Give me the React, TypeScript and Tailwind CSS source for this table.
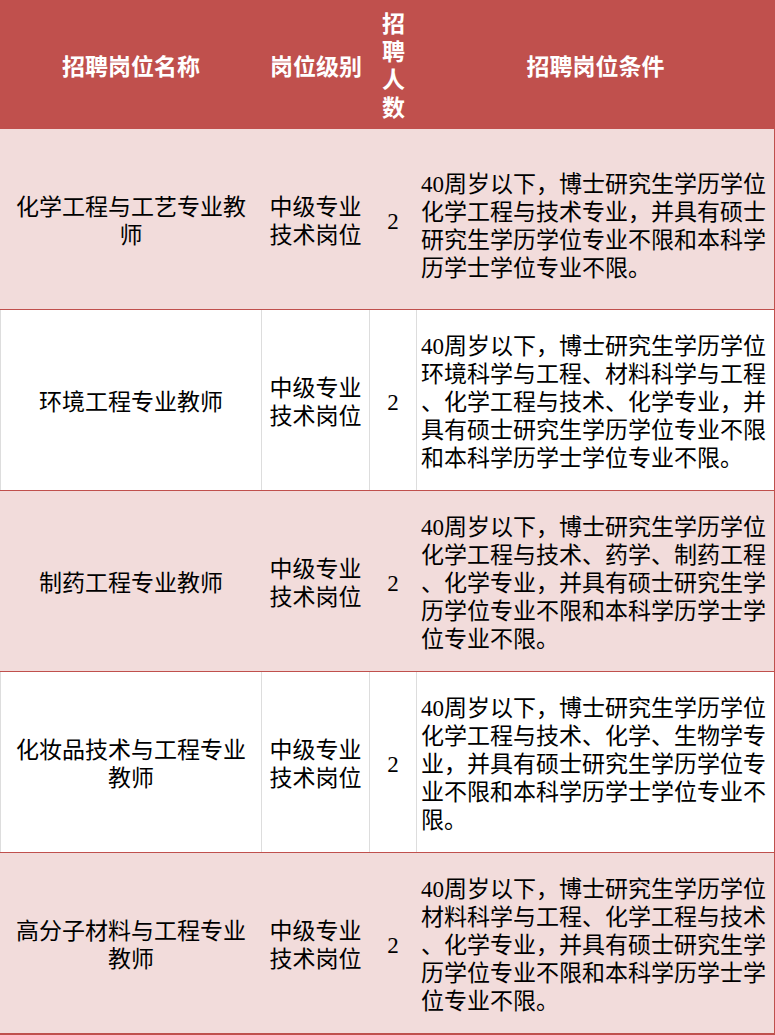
const FONT = {
  fontFamily: '"Liberation Serif", "Noto Sans CJK SC", serif',
};

interface Job {
  name: string[];
  level: string[];
  count: string;
  terms: string[];
  /** first row's terms sit a little lower than centred in the source */
  termsLow?: boolean;
}

const JOBS: Job[] = [
  {
    name: ["化学工程与工艺专业教", "师"],
    level: ["中级专业", "技术岗位"],
    count: "2",
    terms: [
      "40周岁以下，博士研究生学历学位",
      "化学工程与技术专业，并具有硕士",
      "研究生学历学位专业不限和本科学",
      "历学士学位专业不限。",
    ],
    termsLow: true,
  },
  {
    name: ["环境工程专业教师"],
    level: ["中级专业", "技术岗位"],
    count: "2",
    terms: [
      "40周岁以下，博士研究生学历学位",
      "环境科学与工程、材料科学与工程",
      "、化学工程与技术、化学专业，并",
      "具有硕士研究生学历学位专业不限",
      "和本科学历学士学位专业不限。",
    ],
  },
  {
    name: ["制药工程专业教师"],
    level: ["中级专业", "技术岗位"],
    count: "2",
    terms: [
      "40周岁以下，博士研究生学历学位",
      "化学工程与技术、药学、制药工程",
      "、化学专业，并具有硕士研究生学",
      "历学位专业不限和本科学历学士学",
      "位专业不限。",
    ],
  },
  {
    name: ["化妆品技术与工程专业", "教师"],
    level: ["中级专业", "技术岗位"],
    count: "2",
    terms: [
      "40周岁以下，博士研究生学历学位",
      "化学工程与技术、化学、生物学专",
      "业，并具有硕士研究生学历学位专",
      "业不限和本科学历学士学位专业不",
      "限。",
    ],
  },
  {
    name: ["高分子材料与工程专业", "教师"],
    level: ["中级专业", "技术岗位"],
    count: "2",
    terms: [
      "40周岁以下，博士研究生学历学位",
      "材料科学与工程、化学工程与技术",
      "、化学专业，并具有硕士研究生学",
      "历学位专业不限和本科学历学士学",
      "位专业不限。",
    ],
  },
];

function Lines({ lines }: { lines: string[] }) {
  return (
    <>
      {lines.map((l, i) => (
        <div key={i} className="whitespace-nowrap">
          {l}
        </div>
      ))}
    </>
  );
}

export default function App() {
  return (
    <div
      className="w-[775px] bg-white text-[23px] leading-[28px] text-black"
      style={FONT}
    >
      <div className="border-r border-[#C0504D]">
        {/* header */}
        <div className="grid h-[129px] grid-cols-[262px_108px_47px_1fr] bg-[#C0504D] font-bold text-white">
          <div className="flex items-center justify-center pt-[6px]">招聘岗位名称</div>
          <div className="flex items-center justify-center pt-[6px]">岗位级别</div>
          <div className="flex flex-col items-center justify-center pt-[4px]">
            <span>招</span>
            <span>聘</span>
            <span>人</span>
            <span>数</span>
          </div>
          <div className="flex items-center justify-center pt-[6px]">招聘岗位条件</div>
        </div>

        {JOBS.map((job, i) => {
          const pink = i % 2 === 0;
          const last = i === JOBS.length - 1;
          const line = pink ? "border-[#F2DCDB]" : "border-[#DDDDDD]";
          return (
            <div
              key={i}
              className={
                "grid grid-cols-[262px_108px_47px_1fr] border-b border-[#C0504D] " +
                (last ? "h-[182px] border-b-2 " : "h-[181px] ") +
                (pink ? "bg-[#F2DCDB]" : "bg-white")
              }
            >
              <div
                className={
                  "flex flex-col items-center justify-center border-l border-r pt-[6px] text-center " +
                  line
                }
              >
                <Lines lines={job.name} />
              </div>
              <div
                className={
                  "flex flex-col items-center justify-center border-r pt-[6px] text-center " +
                  line
                }
              >
                <Lines lines={job.level} />
              </div>
              <div
                className={
                  "flex items-center justify-center border-r pt-[6px] " + line
                }
              >
                {job.count}
              </div>
              <div
                className={
                  "flex flex-col justify-center pl-[4px] " +
                  (job.termsLow ? "pt-[16px]" : "pt-[5px]")
                }
              >
                <Lines lines={job.terms} />
              </div>
            </div>
          );
        })}
      </div>
    </div>
  );
}
